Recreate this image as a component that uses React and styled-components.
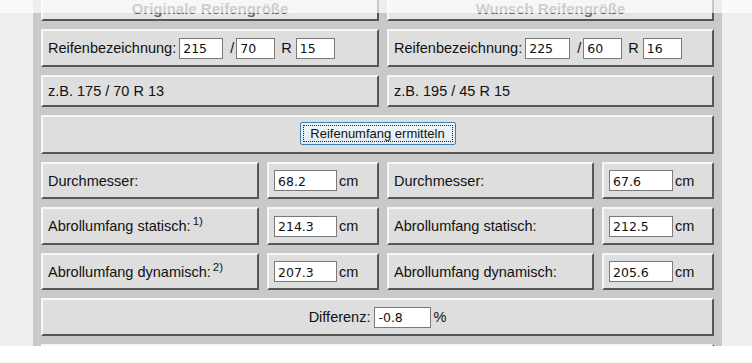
import React from 'react'
import styled, { createGlobalStyle } from 'styled-components'

const GlobalStyle = createGlobalStyle`
  html, body {
    margin: 0;
    padding: 0;
    background: #ffffff;
  }
  body {
    font-family: 'Liberation Sans', Arial, sans-serif;
  }
`

const Page = styled.div`
  position: relative;
  height: 346px;
  overflow: hidden;
  background: #efefef;
`
const Watermark = styled.div`
  position: absolute;
  top: 40px;
  left: -60px;
  right: -60px;
  display: flex;
  justify-content: space-between;
  font: bold 110px 'Liberation Sans', Arial, sans-serif;
  color: transparent;
  -webkit-text-stroke: 3px rgba(0, 0, 0, 0.04);
  transform: rotate(-40deg);
  pointer-events: none;
`
const FadeTop = styled.div`
  position: absolute;
  top: 0;
  left: 0;
  right: 0;
  height: 13px;
  background: rgba(255, 255, 255, 0.68);
`
const Panel = styled.div`
  position: relative;
  margin: -23px 0 0 33px;
  width: 673px;
  padding: 8px;
  background: #c9c9c9;
  display: grid;
  grid-template-columns: 218px 112px 207px 112px;
  grid-template-rows: 36px 38px 32px 39px 37px 38px 37px 38px 40px;
  gap: 8px;
`
const Cell = styled.div`
  grid-column: span ${(p) => p.span || 1};
  display: flex;
  align-items: center;
  justify-content: ${(p) => (p.center ? 'center' : 'flex-start')};
  padding: 0 5px;
  background: #dedede;
  border: 2px solid;
  border-color: #f6f6f6 #565656 #565656 #f6f6f6;
  font-size: 14.5px;
  color: #111111;
  white-space: nowrap;
`
const HeaderCell = styled(Cell)`
  justify-content: center;
  padding-top: 10px;
  font-weight: bold;
  font-size: 15px;
  color: #666666;
  background: #e6e6e6;
`
const Label = styled.span`
  line-height: 18px;
`
const Field = styled.input`
  box-sizing: border-box;
  width: ${(p) => p.w}px;
  height: 21px;
  margin: 0 0 0 ${(p) => p.ml || 0}px;
  padding: 1px 3px 0;
  border: 1px solid #7a7a7a;
  background: #ffffff;
  font: 12.5px 'DejaVu Sans', 'Liberation Sans', sans-serif;
  color: #111111;
  outline: none;
`
const Unit = styled.span`
  margin-left: 2px;
`
const Sep = styled.span`
  margin: 0 ${(p) => p.right}px 0 ${(p) => p.left}px;
`
const Sup = styled.sup`
  font-size: 11.5px;
  margin-left: 2px;
  vertical-align: 6px;
  line-height: 0;
`
const Action = styled.button`
  position: relative;
  box-sizing: border-box;
  width: 156px;
  height: 23px;
  margin-top: -2px;
  padding: 0;
  border: 1px solid #3c7fb1;
  border-radius: 2px;
  background: linear-gradient(#f0f6fa, #e2ebf2);
  font: 13px 'Liberation Sans', Arial, sans-serif;
  color: #111111;

  &::after {
    content: '';
    position: absolute;
    inset: 2px;
    border: 1px dotted #222;
  }
`

const Sizes = ({ values, widths }) => (
  <>
    Reifenbezeichnung:
    <Field w={widths[0]} ml={3} value={values[0]} readOnly />
    <Sep left={7} right={2}>/</Sep>
    <Field w={widths[1]} value={values[1]} readOnly />
    <Sep left={6} right={4}>R</Sep>
    <Field w={widths[2]} value={values[2]} readOnly />
  </>
)

const rows = [
  { label: 'Durchmesser:', a: '68.2', b: '67.6' },
  { label: 'Abrollumfang statisch:', note: '1)', a: '214.3', b: '212.5' },
  { label: 'Abrollumfang dynamisch:', note: '2)', a: '207.3', b: '205.6' },
]

const App = () => (
  <>
    <GlobalStyle />
    <Page>
      <Watermark>
        <span>GO</span>
        <span>LF</span>
      </Watermark>
      <Panel>
        <HeaderCell span={2}>Originale Reifengröße</HeaderCell>
        <HeaderCell span={2}>Wunsch Reifengröße</HeaderCell>

        <Cell span={2}>
          <Sizes values={['215', '70', '15']} widths={[44, 39, 39]} />
        </Cell>
        <Cell span={2}>
          <Sizes values={['225', '60', '16']} widths={[45, 39, 39]} />
        </Cell>

        <Cell span={2}>z.B. 175 / 70 R 13</Cell>
        <Cell span={2}>z.B. 195 / 45 R 15</Cell>

        <Cell span={4} center>
          <Action type='button'>Reifenumfang ermitteln</Action>
        </Cell>

        {rows.map((row) => (
          <React.Fragment key={row.label}>
            <Cell>
              <Label>
                {row.label}
                {row.note && <Sup>{row.note}</Sup>}
              </Label>
            </Cell>
            <Cell>
              <Field w={63} value={row.a} readOnly />
              <Unit>cm</Unit>
            </Cell>
            <Cell>{row.label}</Cell>
            <Cell>
              <Field w={64} value={row.b} readOnly />
              <Unit>cm</Unit>
            </Cell>
          </React.Fragment>
        ))}

        <Cell span={4} center>
          Differenz:
          <Field w={57} ml={4} value='-0.8' readOnly />
          <Unit>%</Unit>
        </Cell>
        <Cell span={4} />
      </Panel>
      <FadeTop />
    </Page>
  </>
)

export default App
